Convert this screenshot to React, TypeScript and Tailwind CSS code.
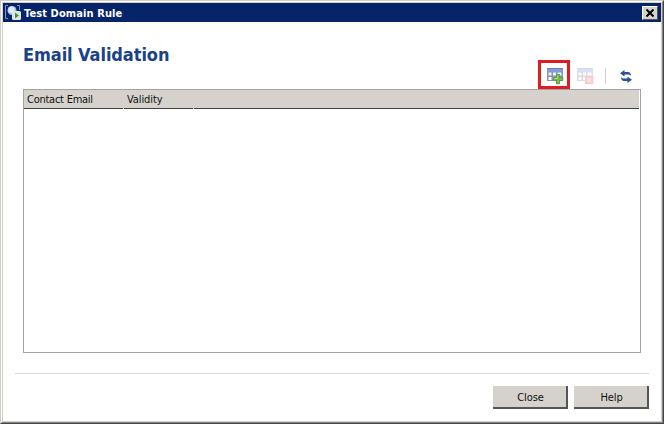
import React from "react";

function AppIcon() {
  return (
    <svg width="17" height="17" viewBox="0 0 17 17" fill="none" className="shrink-0">
      <path d="M4 1.500H1.500V14.500H4M13 1.500H15.500V6" stroke="#8496bf" strokeWidth="1" />
      <circle cx="8" cy="6.500" r="4.500" fill="#aabfe6" />
      <circle cx="7.500" cy="5.800" r="3.200" fill="#e0e9f9" />
      <rect x="8" y="7" width="9" height="9" rx="1.500" fill="#dfe6df" />
      <path d="M11 8.500L15 11.500L11 14.500Z" fill="#3d9c2c" />
    </svg>
  );
}

function GridShape() {
  return (
    <>
      <rect x="0" y="0" width="16" height="13" rx="0.500" fill="#8b91b0" />
      <rect x="0" y="0" width="16" height="4" fill="#7f9fd6" />
      <rect x="0" y="0" width="16" height="1" fill="#6483bf" />
      <path d="M1.500 6H4.500M6 6H9M10.500 6H14.500" stroke="#eef4fd" strokeWidth="3" />
      <path d="M1.500 10.500H4.500M6 10.500H9M10.500 10.500H14.500" stroke="#fff" strokeWidth="3" />
    </>
  );
}

function AddRowIcon() {
  return (
    <svg width="17" height="17" viewBox="0 0 17 17" className="block">
      <GridShape />
      <path d="M9.500 6.500H12.500V9.500H15.800V12.500H12.500V15.800H9.500V12.500H6.500V9.500H9.500Z" fill="#77bd4b" stroke="#629b48" />
      <path d="M10.500 7.500V10.500H7.500" stroke="#a9da82" fill="none" />
    </svg>
  );
}

function RemoveRowIcon() {
  return (
    <svg width="17" height="17" viewBox="0 0 17 17" className="block opacity-30">
      <GridShape />
      <rect x="8" y="8" width="8.500" height="8" fill="#e0605d" />
      <path d="M10.500 10L14 14M14 10L10.500 14" stroke="#f4baba" strokeWidth="1.200" />
    </svg>
  );
}

function RefreshIcon() {
  return (
    <svg width="12" height="13" viewBox="0 0 12 13" className="block">
      <path d="M4.500 0V2H8Q10.800 2.200 11 5.800Q9.800 4.600 8 4.500H4.500V6.500L0 3.300Z" fill="#285097" />
      <path d="M7.500 13V11H4Q1.200 10.800 1 7.200Q2.200 8.400 4 8.500H7.500V6.500L12 9.700Z" fill="#285097" />
    </svg>
  );
}

function DialogButton({ label }: { label: string }) {
  return (
    <button className="flex h-[23px] w-[75px] items-center justify-center border-r-2 border-b-2 border-[#555555] bg-[#d5d2cd] pt-[3px] pl-[2px] text-[11px] leading-[14px] tracking-[-0.1px] text-[#111111]">
      {label}
    </button>
  );
}

export default function App() {
  return (
    <div className="h-[424px] w-[664px] overflow-hidden border-t border-l border-r border-b border-t-[#d4d0c8] border-l-[#d4d0c8] border-r-[#444444] border-b-[#444444] bg-white font-['DejaVu_Sans_Condensed','Noto_Sans',sans-serif]">
      <div className="flex h-full flex-col border border-t-white border-l-white border-r-[#858585] border-b-[#858585]">
        <div className="flex min-h-0 flex-1 flex-col border border-[#d4d0c8]">
          <header className="flex h-[19px] shrink-0 items-center bg-[#06246a] pr-[3px] pl-px">
            <AppIcon />
            <h1 className="ml-[3px] flex-1 pt-px text-[11px] leading-[15px] font-bold tracking-[0.1px] text-white">Test Domain Rule</h1>
            <button aria-label="Close window" className="flex h-[14px] w-4 items-center justify-center border-t border-r border-b border-l border-t-white border-r-[#555555] border-b-[#555555] border-l-white bg-[#d5d2cd]">
              <svg width="8" height="8" viewBox="0 0 8 8">
                <path d="M0.500 0.500L7.500 7.500M7.500 0.500L0.500 7.500" stroke="#000" strokeWidth="2" />
              </svg>
            </button>
          </header>

          <main className="flex min-h-0 flex-1 flex-col pr-[12px] pl-[12px]">
            <section className="flex flex-col px-2">
              <h2 className="mt-[21px] h-[17px] text-[18px] leading-[23px] font-bold tracking-[-0.080px] text-[#1a4287]">Email Validation</h2>
              <div className="mr-[-1px] flex h-[29px] items-start justify-end">
                <button aria-label="Add row" className="flex h-[29px] w-8 items-start justify-start border-[3px] border-[#e11b22] pt-[5px] pl-[6px]">
                  <AddRowIcon />
                </button>
                <button aria-label="Remove row" className="mt-[8px] ml-[7px]">
                  <RemoveRowIcon />
                </button>
                <span className="mt-[8px] ml-[11px] h-4 w-px bg-[#d2d2d2]" />
                <button aria-label="Refresh" className="mt-[10px] mr-[10px] ml-[14px]">
                  <RefreshIcon />
                </button>
              </div>
              <div className="h-[264px] w-[618px] border border-[#a3a3a3] bg-white">
                <div className="mr-px flex h-[19px] bg-[#d5d2cd] text-[11px] leading-[20px] tracking-[-0.25px] text-[#111111]">
                  <span className="mr-px w-[99px] border-b border-[#414141] pl-[3px]">Contact Email</span>
                  <span className="mr-px w-[69px] border-b border-[#414141] pl-[3px] tracking-[-0.1px]">Validity</span>
                  <span className="flex-1 border-b border-[#414141]" />
                </div>
              </div>
            </section>
            <hr className="mt-5 h-px border-0 bg-[#d8d8d8]" />
            <footer className="mt-[12px] flex justify-end gap-[6px]">
              <DialogButton label="Close" />
              <DialogButton label="Help" />
            </footer>
          </main>
        </div>
      </div>
    </div>
  );
}
